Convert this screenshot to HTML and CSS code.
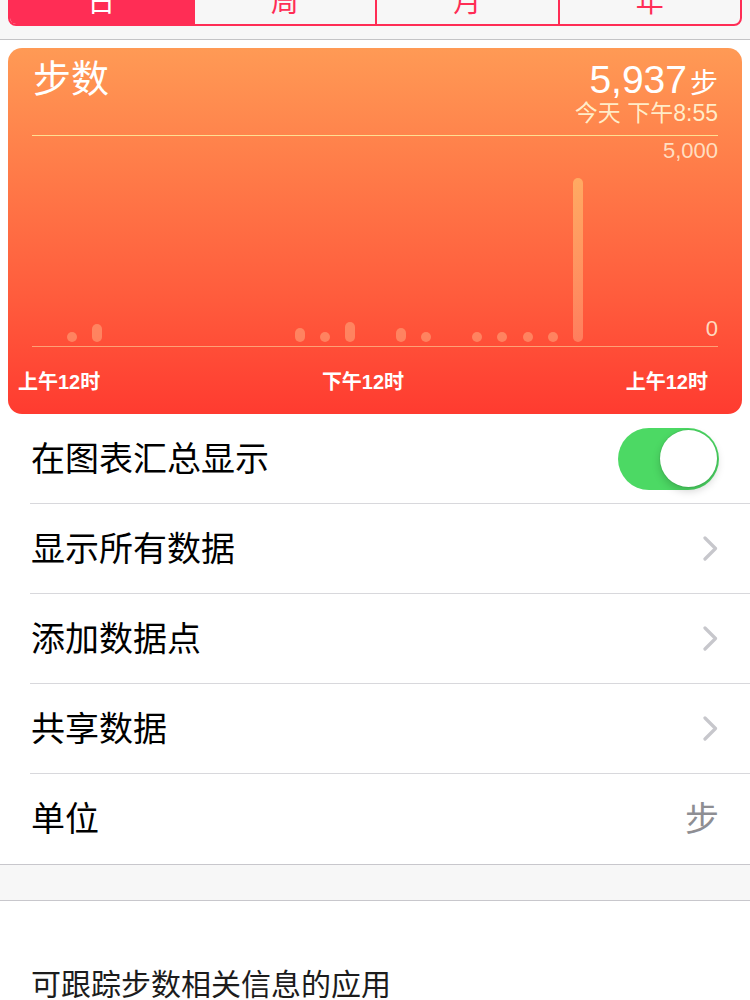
FILE: index.html
```html
<!DOCTYPE html>
<html lang="zh-CN">
<head>
<meta charset="utf-8">
<title>步数</title>
<link rel="stylesheet" href="styles.css">
</head>
<body>
<header class="topbar">
  <div class="segmented">
    <div class="seg active">日</div>
    <div class="seg">周</div>
    <div class="seg">月</div>
    <div class="seg">年</div>
  </div>
</header>
<main class="content">
  <section class="card">
    <div class="card-head">
      <div class="card-title">步数</div>
      <div class="card-value">
        <div class="value-line"><span class="value-num">5,937</span><span class="value-unit">步</span></div>
        <div class="value-date">今天 下午8:55</div>
      </div>
    </div>
    <div class="chart">
      <div class="chart-max">5,000</div>
      <div class="chart-body">
        <div class="bars">
          <div class="cell"><div class="bar" style="height:10px"></div></div>
          <div class="cell"><div class="bar" style="height:18px"></div></div>
          <div class="cell"></div>
          <div class="cell"></div>
          <div class="cell"></div>
          <div class="cell"></div>
          <div class="cell"></div>
          <div class="cell"></div>
          <div class="cell"></div>
          <div class="cell"><div class="bar" style="height:14px"></div></div>
          <div class="cell"><div class="bar" style="height:10px"></div></div>
          <div class="cell"><div class="bar" style="height:20px"></div></div>
          <div class="cell"></div>
          <div class="cell"><div class="bar" style="height:14px"></div></div>
          <div class="cell"><div class="bar" style="height:10px"></div></div>
          <div class="cell"></div>
          <div class="cell"><div class="bar" style="height:10px"></div></div>
          <div class="cell"><div class="bar" style="height:10px"></div></div>
          <div class="cell"><div class="bar" style="height:10px"></div></div>
          <div class="cell"><div class="bar" style="height:10px"></div></div>
          <div class="cell"><div class="bar tall" style="height:164px"></div></div>
          <div class="cell"></div>
          <div class="cell"></div>
          <div class="cell"></div>
        </div>
        <div class="chart-zero">0</div>
      </div>
    </div>
    <div class="axis">
      <span>上午12时</span>
      <span>下午12时</span>
      <span>上午12时</span>
    </div>
  </section>

  <ul class="list">
    <li class="row">
      <span class="row-label">在图表汇总显示</span>
      <div class="switch"><div class="knob"></div></div>
    </li>
    <li class="row">
      <span class="row-label">显示所有数据</span>
      <svg class="chevron" width="15" height="25" viewBox="0 0 15 25"><polyline points="2,2 12.5,12.5 2,23" fill="none" stroke="#c7c7cc" stroke-width="3.2" stroke-linecap="round" stroke-linejoin="round"/></svg>
    </li>
    <li class="row">
      <span class="row-label">添加数据点</span>
      <svg class="chevron" width="15" height="25" viewBox="0 0 15 25"><polyline points="2,2 12.5,12.5 2,23" fill="none" stroke="#c7c7cc" stroke-width="3.2" stroke-linecap="round" stroke-linejoin="round"/></svg>
    </li>
    <li class="row">
      <span class="row-label">共享数据</span>
      <svg class="chevron" width="15" height="25" viewBox="0 0 15 25"><polyline points="2,2 12.5,12.5 2,23" fill="none" stroke="#c7c7cc" stroke-width="3.2" stroke-linecap="round" stroke-linejoin="round"/></svg>
    </li>
    <li class="row">
      <span class="row-label">单位</span>
      <span class="row-value">步</span>
    </li>
  </ul>

  <div class="band"></div>

  <div class="section-title">可跟踪步数相关信息的应用</div>
</main>
</body>
</html>
```

FILE: styles.css
```css
* {
  box-sizing: border-box;
}

html, body {
  margin: 0;
  padding: 0;
  background: #ffffff;
}

body {
  width: 750px;
  height: 1000px;
  overflow: hidden;
  font-family: "Liberation Sans", "Noto Sans CJK SC", sans-serif;
  color: #000;
}

/* top bar with segmented control */
.topbar {
  height: 40px;
  background: #f7f7f7;
  border-bottom: 1px solid #c4c4c6;
  overflow: hidden;
}

.segmented {
  margin: -32px 8px 0 8px;
  height: 58px;
  border: 2px solid #ff2d55;
  border-radius: 8px;
  display: grid;
  grid-template-columns: repeat(4, 1fr);
  overflow: hidden;
}

.seg {
  display: flex;
  align-items: center;
  justify-content: center;
  padding-top: 6px;
  font-size: 28px;
  color: #ff2d55;
  border-left: 2px solid #ff2d55;
}

.seg:first-child {
  border-left: none;
}

.seg.active {
  background: #ff2d55;
  color: #fff;
}

/* card */
.content {
  padding-top: 8px;
}

.card {
  margin: 0 8px;
  padding: 0 24px;
  border-radius: 14px;
  background: linear-gradient(180deg, #ff9a55 0%, #ff7a48 35%, #ff5a3c 70%, #ff3b30 100%);
  color: #fff;
}

.card-head {
  height: 88px;
  padding-top: 8px;
  display: flex;
  justify-content: space-between;
  align-items: flex-start;
  border-bottom: 1px solid rgba(255, 228, 150, 0.95);
}

.card-title {
  font-size: 38px;
  line-height: 46px;
  margin-left: 1px;
}

.card-value {
  margin-top: 4px;
  text-align: right;
}

.value-line {
  line-height: 40px;
  height: 40px;
}

.value-num {
  font-size: 39px;
}

.value-unit {
  font-size: 28px;
  margin-left: 3px;
}

.value-date {
  font-size: 23px;
  line-height: 26px;
  color: rgba(255, 240, 205, 0.97);
}

/* chart */
.chart {
  height: 211px;
  display: flex;
  flex-direction: column;
  border-bottom: 1px solid rgba(255, 205, 150, 0.65);
}

.chart-max {
  margin-top: 4px;
  text-align: right;
  font-size: 22px;
  line-height: 22px;
  color: rgba(255, 235, 210, 0.9);
}

.chart-body {
  flex: 1;
  display: flex;
  align-items: flex-end;
  padding-bottom: 4px;
}

.bars {
  margin-left: 27px;
  width: 608px;
  height: 100%;
  display: grid;
  grid-template-columns: repeat(24, 1fr);
  align-items: end;
  justify-items: center;
}

.bar {
  width: 10px;
  border-radius: 5px;
  background: rgba(255, 200, 150, 0.42);
}

.bar.tall {
  background: linear-gradient(180deg, rgba(255, 210, 120, 0.55) 0%, rgba(255, 195, 150, 0.4) 100%);
}

.chart-zero {
  margin-left: auto;
  margin-bottom: 2px;
  font-size: 22px;
  line-height: 22px;
  color: rgba(255, 235, 210, 0.9);
}

.axis {
  display: flex;
  justify-content: space-between;
  margin: 0 10px 0 -14px;
  padding: 23px 0 20px;
  font-size: 20px;
  line-height: 24px;
  font-weight: 600;
}

/* list */
.list {
  list-style: none;
  margin: 0;
  padding: 0;
  border-bottom: 1px solid #c8c7cc;
}

.row {
  height: 90px;
  margin-left: 30px;
  padding-right: 31px;
  display: flex;
  align-items: center;
  justify-content: space-between;
  border-bottom: 1px solid #d8d8dc;
}

.row:last-child {
  border-bottom: none;
}

.row-label {
  font-size: 34px;
  line-height: 40px;
  margin-left: 1px;
}

.row-value {
  font-size: 34px;
  line-height: 40px;
  color: #8e8e93;
}

.chevron {
  display: block;
  margin-right: 1px;
}

.switch {
  width: 101px;
  height: 62px;
  border-radius: 31px;
  background: #4cd964;
  display: flex;
  align-items: center;
  justify-content: flex-end;
  padding-right: 2px;
}

.knob {
  width: 57px;
  height: 57px;
  border-radius: 50%;
  background: #fff;
  box-shadow: 0 4px 8px rgba(0, 0, 0, 0.18), 0 0 0 1px rgba(0, 0, 0, 0.06);
}

.band {
  height: 36px;
  background: #f7f7f7;
  border-bottom: 1px solid #c8c7cc;
}

.section-title {
  margin: 66px 0 0 31px;
  font-size: 30px;
  line-height: 36px;
  color: #1c1c1c;
}
```
